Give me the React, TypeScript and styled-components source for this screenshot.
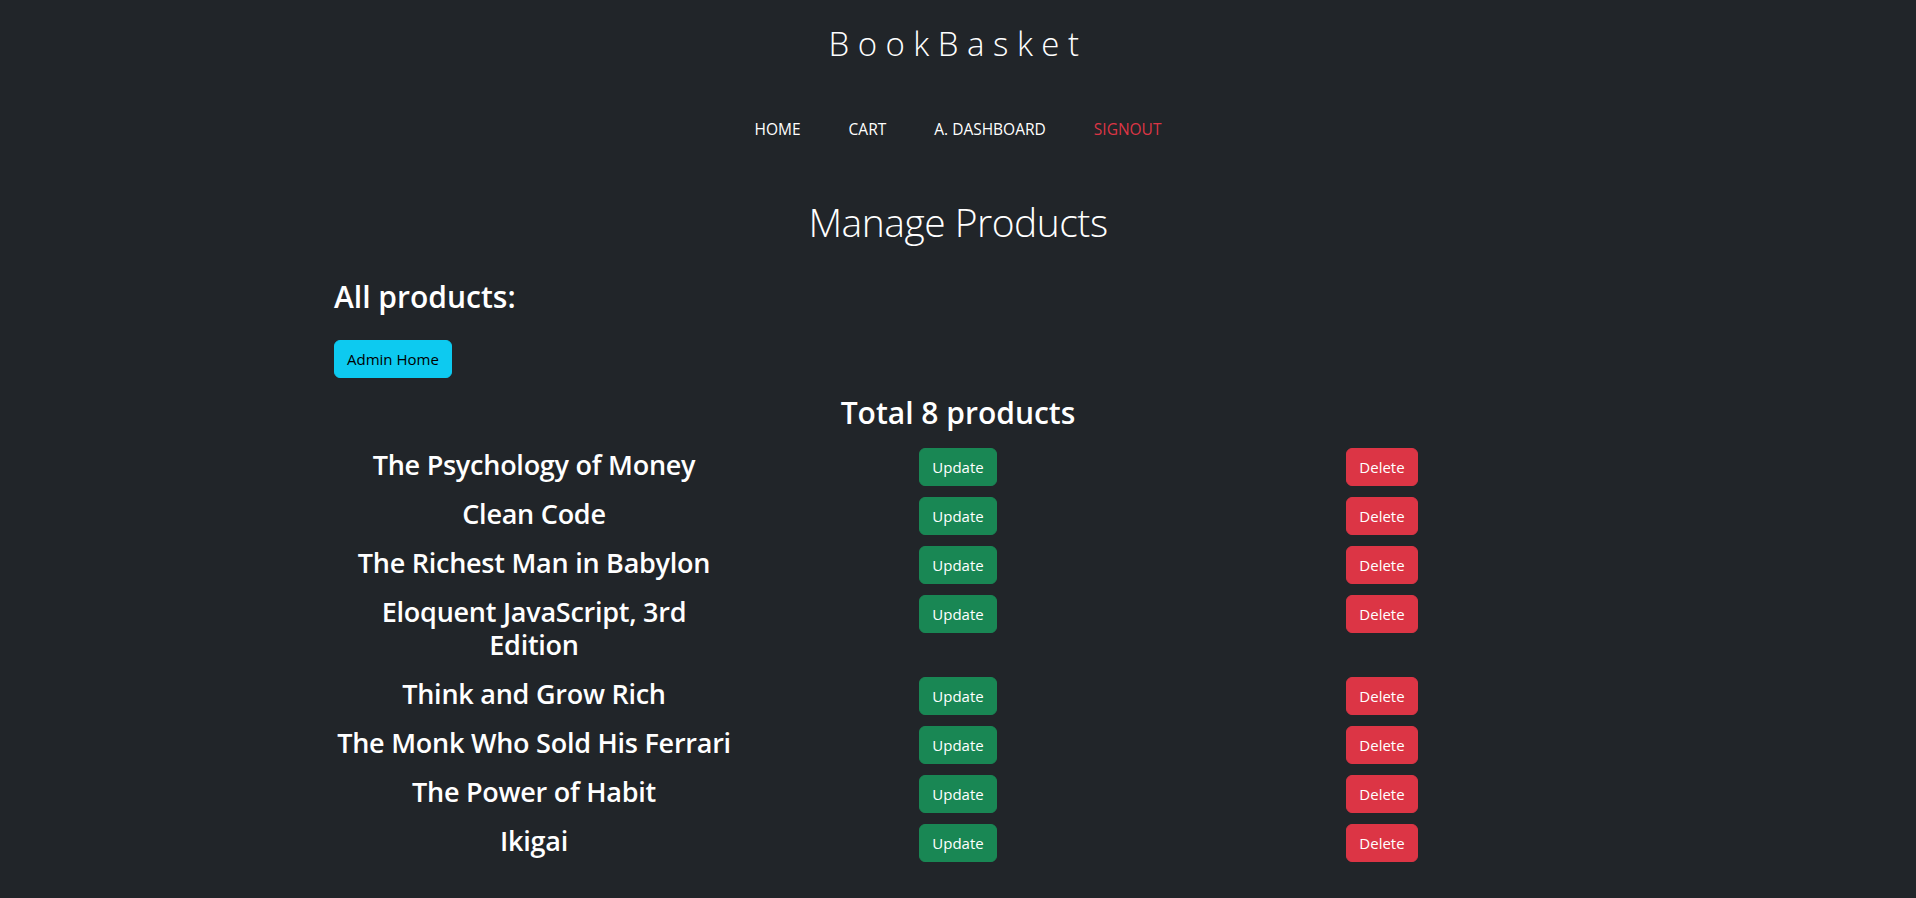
import React from "react";
import styled, { createGlobalStyle } from "styled-components";

const GlobalStyle = createGlobalStyle`
  html, body {
    margin: 0;
    padding: 0;
    background: #212529;
  }
  body {
    font-family: "Open Sans", "Noto Sans", "Liberation Sans", sans-serif;
    color: #ffffff;
    -webkit-font-smoothing: antialiased;
  }
  * { box-sizing: border-box; }
`;

const Page = styled.div`
  min-height: 898px;
  background: #212529;
  display: flex;
  flex-direction: column;
`;

const Brand = styled.h1`
  margin: 24px 0 0;
  text-align: center;
  font-size: 33px;
  line-height: 40px;
  font-weight: 300;
  letter-spacing: 8.5px;
  color: #ffffff;
`;

const Nav = styled.nav`
  display: flex;
  justify-content: center;
  margin-top: 45px;
`;

const NavLink = styled.a<{ $danger?: boolean }>`
  display: block;
  padding: 8px 24px;
  font-size: 15.5px;
  line-height: 24px;
  color: ${(p) => (p.$danger ? "#dc3545" : "#ffffff")};
  text-decoration: none;
  cursor: pointer;
`;

const Title = styled.h2`
  margin: 48px 0 0;
  text-align: center;
  font-size: 39px;
  line-height: 50px;
  font-weight: 300;
  letter-spacing: -0.5px;
  color: #ffffff;
`;

const Content = styled.main`
  width: 1248px;
  margin: 31px auto 0;
`;

const SectionHeading = styled.h2`
  margin: 0 0 24px;
  font-size: 30px;
  line-height: 38px;
  font-weight: 600;
  color: #ffffff;
`;

const Button = styled.button<{ $variant: "info" | "success" | "danger" }>`
  display: inline-block;
  padding: 6px 12px;
  font-family: inherit;
  font-size: 15px;
  line-height: 24px;
  font-weight: 400;
  border-radius: 6px;
  cursor: pointer;
  border: 1px solid
    ${(p) =>
      p.$variant === "info" ? "#0dcaf0" : p.$variant === "success" ? "#198754" : "#dc3545"};
  background: ${(p) =>
    p.$variant === "info" ? "#0dcaf0" : p.$variant === "success" ? "#198754" : "#dc3545"};
  color: ${(p) => (p.$variant === "info" ? "#000000" : "#ffffff")};
`;

const Total = styled.h2`
  margin: 16px 0;
  text-align: center;
  font-size: 30px;
  line-height: 38px;
  font-weight: 600;
  color: #ffffff;
`;

const Row = styled.div`
  display: grid;
  grid-template-columns: repeat(3, 1fr);
  column-gap: 24px;
  align-items: start;
  margin-bottom: 8px;
  text-align: center;
`;

const Cell = styled.div`
  text-align: center;
`;

const Name = styled.h3`
  margin: 0 0 8px;
  padding: 0 2px;
  font-size: 27px;
  line-height: 33px;
  font-weight: 600;
  letter-spacing: -0.25px;
  color: #ffffff;
`;

const products = [
  "The Psychology of Money",
  "Clean Code",
  "The Richest Man in Babylon",
  "Eloquent JavaScript, 3rd Edition",
  "Think and Grow Rich",
  "The Monk Who Sold His Ferrari",
  "The Power of Habit",
  "Ikigai",
];

export default function App() {
  return (
    <Page>
      <GlobalStyle />
      <Brand>BookBasket</Brand>
      <Nav>
        <NavLink>HOME</NavLink>
        <NavLink>CART</NavLink>
        <NavLink>A. DASHBOARD</NavLink>
        <NavLink $danger>SIGNOUT</NavLink>
      </Nav>
      <Title>Manage Products</Title>
      <Content>
        <SectionHeading>All products:</SectionHeading>
        <Button $variant="info">Admin Home</Button>
        <Total>Total {products.length} products</Total>
        {products.map((name) => (
          <Row key={name}>
            <Cell>
              <Name>{name}</Name>
            </Cell>
            <Cell>
              <Button $variant="success">Update</Button>
            </Cell>
            <Cell>
              <Button $variant="danger">Delete</Button>
            </Cell>
          </Row>
        ))}
      </Content>
    </Page>
  );
}
